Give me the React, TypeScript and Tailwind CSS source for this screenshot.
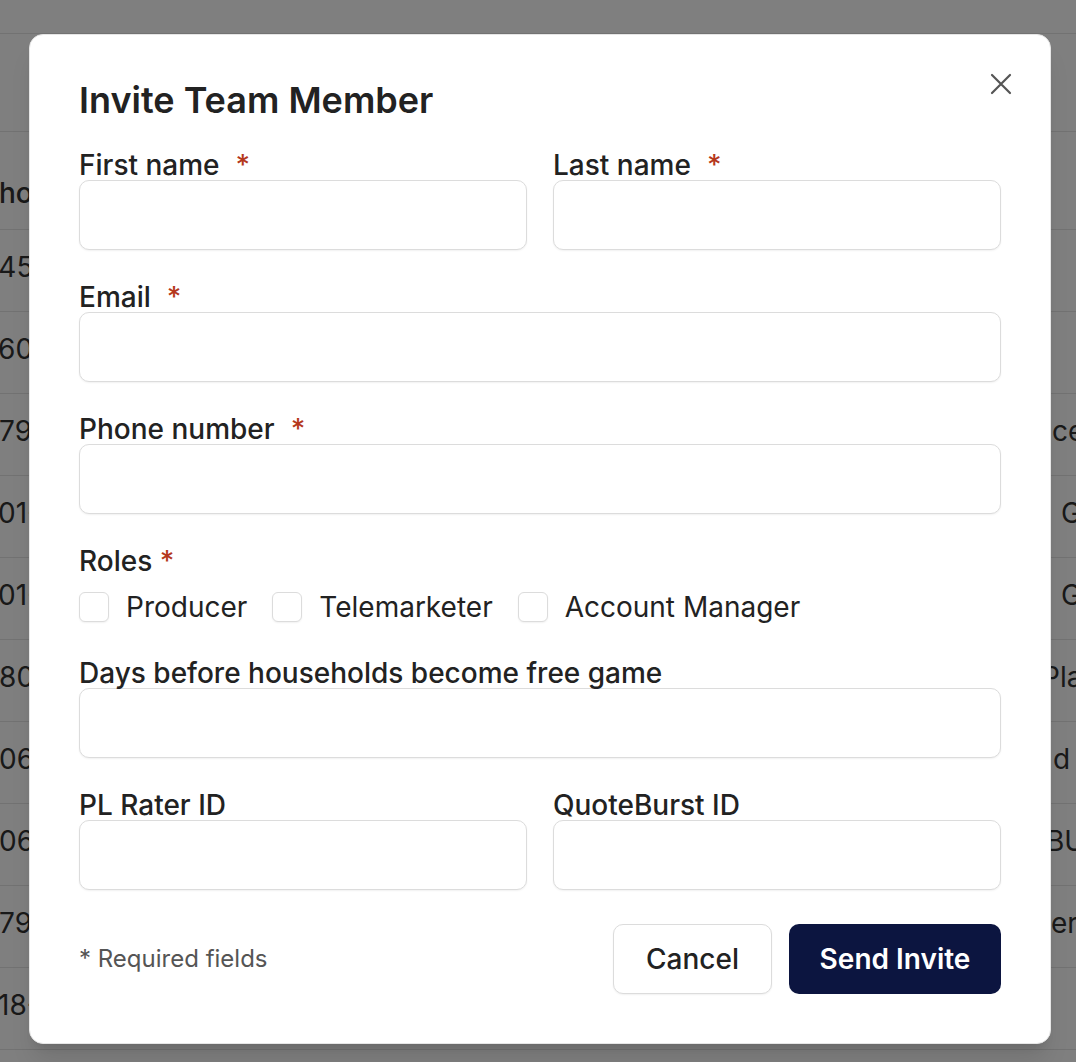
import { useState } from "react";

const leftCells = ["345-0112", "560-2281", "479-3310", "201-5542", "201-8876", "480-1123", "406-7765", "406-2219", "479-5580", "218-4471"];

const rightCells: { text: string; cls: string }[] = [
	{ text: "", cls: "" },
	{ text: "", cls: "" },
	{ text: "ce", cls: "pl-[16px]" },
	{ text: "G", cls: "pl-[25px]" },
	{ text: "G", cls: "pl-[25px]" },
	{ text: "Pla", cls: "pl-[6px]" },
	{ text: "d", cls: "pl-[17px]" },
	{ text: "BU", cls: "pl-[10px]" },
	{ text: "er", cls: "pl-[15px]" },
	{ text: "", cls: "" },
];

function Label({ text, gap = "ml-4" }: { text: string; gap?: string }) {
	return (
		<label className="block h-[32px] leading-[34px] text-[28px] font-medium text-[#222]">
			{text}
			<span className={`${gap} text-[#b5381c]`}>*</span>
		</label>
	);
}

function PlainLabel({ text }: { text: string }) {
	return <label className="block h-[32px] leading-[34px] text-[28px] font-medium text-[#222] whitespace-nowrap">{text}</label>;
}

function Field() {
	return (
		<input className="block w-full h-[70px] rounded-[10px] border border-[#dcdcdc] bg-white shadow-[0_1px_2px_rgba(0,0,0,0.06)] px-4 text-[26px] outline-none" />
	);
}

function Check({ label }: { label: string }) {
	const [on, setOn] = useState(false);
	return (
		<button type="button" onClick={() => setOn(!on)} className="flex items-center gap-[17px]">
			<span
				className={
					on
						? "w-[30px] h-[30px] rounded-[6px] border border-[#0c1540] bg-[#0c1540]"
						: "w-[30px] h-[30px] rounded-[6px] border border-[#dcdcdc] bg-white shadow-[0_1px_2px_rgba(0,0,0,0.06)]"
				}
			/>
			<span className="text-[28px] text-[#222] leading-[34px]">{label}</span>
		</button>
	);
}

export default function App() {
	return (
		<div className="relative w-[1076px] h-[1062px] overflow-hidden bg-white text-[#333]" style={{ fontFamily: "Inter, 'Noto Sans', sans-serif" }}>
			{/* page behind the dialog */}
			<div className="h-[34px] border-b border-[#e4e4e4]" />
			<div className="h-[98px] border-b border-[#e4e4e4]" />
			<div className="relative h-[98px] border-b border-[#e4e4e4] text-[28px] font-medium">
				<span className="absolute left-[-19px] top-[44px] leading-[34px]">Phone</span>
			</div>
			{leftCells.map((t, i) => (
				<div key={t} className="relative h-[82px] border-b border-[#e4e4e4] text-[28px]">
					<span className="absolute left-[-19px] top-[20px] leading-[34px]">{t}</span>
					<span className={`absolute left-[1036px] top-[20px] leading-[34px] whitespace-nowrap ${rightCells[i].cls}`}>{rightCells[i].text}</span>
				</div>
			))}

			{/* overlay */}
			<div className="absolute inset-0 bg-black/50 flex items-start pl-[29px] pt-[34px]">
				<div className="relative w-[1022px] h-[1010px] bg-white rounded-[14px] border border-[#e6e6e6] shadow-xl px-[49px] pt-[45px]">
					<button className="absolute right-[38px] top-[38px] w-[22px] h-[22px] text-[#555]">
						<svg viewBox="0 0 22 22" width="22" height="22" fill="none" stroke="currentColor" strokeWidth="2.2" strokeLinecap="round">
							<path d="M2 2L20 20M20 2L2 20" />
						</svg>
					</button>

					<h2 className="text-[36px] leading-[40px] font-semibold text-[#222]">Invite Team Member</h2>

					<div className="grid grid-cols-2 gap-x-[26px] mt-[28px]">
						<div>
							<Label text="First name" />
							<Field />
						</div>
						<div>
							<Label text="Last name" />
							<Field />
						</div>
					</div>

					<div className="mt-[30px]">
						<Label text="Email" />
						<Field />
					</div>

					<div className="mt-[30px]">
						<Label text="Phone number" />
						<Field />
					</div>

					<div className="mt-[30px]">
						<label className="block h-[32px] leading-[34px] text-[28px] font-medium text-[#222]">
							Roles <span className="text-[#b5381c]">*</span>
						</label>
						<div className="flex items-center gap-[25px] mt-[14px] h-[34px]">
							<Check label="Producer" />
							<Check label="Telemarketer" />
							<Check label="Account Manager" />
						</div>
					</div>

					<div className="mt-[32px]">
						<PlainLabel text="Days before households become free game" />
						<Field />
					</div>

					<div className="grid grid-cols-2 gap-x-[26px] mt-[30px]">
						<div>
							<PlainLabel text="PL Rater ID" />
							<Field />
						</div>
						<div>
							<PlainLabel text="QuoteBurst ID" />
							<Field />
						</div>
					</div>

					<div className="flex items-center justify-between mt-[34px]">
						<span className="text-[24px] text-[#555]">* Required fields</span>
						<div className="flex gap-[17px]">
							<button className="w-[159px] h-[70px] rounded-[10px] border border-[#dcdcdc] bg-white shadow-[0_1px_2px_rgba(0,0,0,0.06)] text-[28px] font-medium text-[#222]">
								Cancel
							</button>
							<button className="w-[212px] h-[70px] rounded-[10px] bg-[#0c1540] text-[28px] font-semibold text-white">Send Invite</button>
						</div>
					</div>
				</div>
			</div>
		</div>
	);
}
